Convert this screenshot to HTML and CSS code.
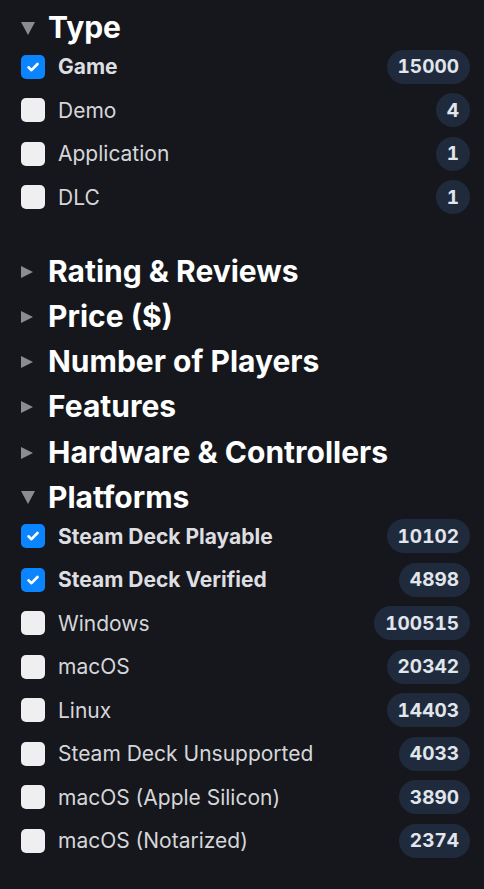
FILE: index.html
```html
<!DOCTYPE html>
<html>
<head>
<meta charset="utf-8">
<link rel="stylesheet" href="styles.css">
</head>
<body>
<div class="panel">
  <section class="section open">
    <div class="heading"><span class="caret down"></span>Type</div>
    <ul class="list">
      <li class="row checked"><span class="box"><svg viewBox="0 0 24 24" width="24" height="24"><path d="M7.5 12.3l3 2.9 6-6.2" fill="none" stroke="#fff" stroke-width="2.6" stroke-linecap="round" stroke-linejoin="round"/></svg></span><span class="label">Game</span><span class="badge">15000</span></li>
      <li class="row"><span class="box"></span><span class="label">Demo</span><span class="badge">4</span></li>
      <li class="row"><span class="box"></span><span class="label">Application</span><span class="badge">1</span></li>
      <li class="row"><span class="box"></span><span class="label">DLC</span><span class="badge">1</span></li>
    </ul>
  </section>
  <section class="section"><div class="heading"><span class="caret right"></span>Rating &amp; Reviews</div></section>
  <section class="section"><div class="heading"><span class="caret right"></span>Price ($)</div></section>
  <section class="section"><div class="heading"><span class="caret right"></span>Number of Players</div></section>
  <section class="section"><div class="heading"><span class="caret right"></span>Features</div></section>
  <section class="section"><div class="heading"><span class="caret right"></span>Hardware &amp; Controllers</div></section>
  <section class="section open">
    <div class="heading"><span class="caret down"></span>Platforms</div>
    <ul class="list">
      <li class="row checked"><span class="box"><svg viewBox="0 0 24 24" width="24" height="24"><path d="M7.5 12.3l3 2.9 6-6.2" fill="none" stroke="#fff" stroke-width="2.6" stroke-linecap="round" stroke-linejoin="round"/></svg></span><span class="label">Steam Deck Playable</span><span class="badge">10102</span></li>
      <li class="row checked"><span class="box"><svg viewBox="0 0 24 24" width="24" height="24"><path d="M7.5 12.3l3 2.9 6-6.2" fill="none" stroke="#fff" stroke-width="2.6" stroke-linecap="round" stroke-linejoin="round"/></svg></span><span class="label">Steam Deck Verified</span><span class="badge">4898</span></li>
      <li class="row"><span class="box"></span><span class="label">Windows</span><span class="badge">100515</span></li>
      <li class="row"><span class="box"></span><span class="label">macOS</span><span class="badge">20342</span></li>
      <li class="row"><span class="box"></span><span class="label">Linux</span><span class="badge">14403</span></li>
      <li class="row"><span class="box"></span><span class="label">Steam Deck Unsupported</span><span class="badge">4033</span></li>
      <li class="row"><span class="box"></span><span class="label">macOS (Apple Silicon)</span><span class="badge">3890</span></li>
      <li class="row"><span class="box"></span><span class="label">macOS (Notarized)</span><span class="badge">2374</span></li>
    </ul>
  </section>
</div>
</body>
</html>
```
FILE: styles.css
```css
html, body {
  margin: 0;
  padding: 0;
  background: #15171d;
}
body {
  font-family: Inter, "Noto Sans", sans-serif;
  color: #fff;
}
.panel {
  padding: 4.5px 14px 0 21px;
}
.section {
  padding: 4.6px 0;
}
.heading {
  display: flex;
  align-items: center;
  height: 36px;
  font-size: 30px;
  font-weight: 700;
  color: #fff;
}
.caret {
  width: 27px;
  flex: none;
  display: flex;
  align-items: center;
}
.caret.down::before {
  content: "";
  display: block;
  border-left: 7px solid transparent;
  border-right: 7px solid transparent;
  border-top: 13px solid #8c8c8f;
  margin-top: 2px;
}
.caret.right::before {
  content: "";
  display: block;
  border-top: 6px solid transparent;
  border-bottom: 6px solid transparent;
  border-left: 12px solid #8c8c8f;
  margin-top: 2px;
}
.list {
  list-style: none;
  margin: 0 0 24.5px 0;
  padding: 0;
}
.section:last-child .list { margin-bottom: 0; }
.row {
  display: flex;
  align-items: center;
  height: 43.5px;
}
.box {
  width: 24px;
  height: 24px;
  border-radius: 5px;
  background: #efeff1;
  flex: none;
  display: flex;
}
.row.checked .box {
  background: #0a84ff;
}
.label {
  margin-left: 13px;
  font-size: 21px;
  color: #d6d6d9;
  flex: 1;
}
.row.checked .label {
  font-weight: 700;
  color: #dedee1;
}
.badge {
  flex: none;
  height: 34px;
  min-width: 34px;
  box-sizing: border-box;
  padding: 0 11px;
  border-radius: 17px;
  background: #1f2b3d;
  color: #e1e5ec;
  font-size: 19px;
  font-weight: 700;
  font-variant-numeric: tabular-nums;
  display: flex;
  align-items: center;
  justify-content: center;
}
```
